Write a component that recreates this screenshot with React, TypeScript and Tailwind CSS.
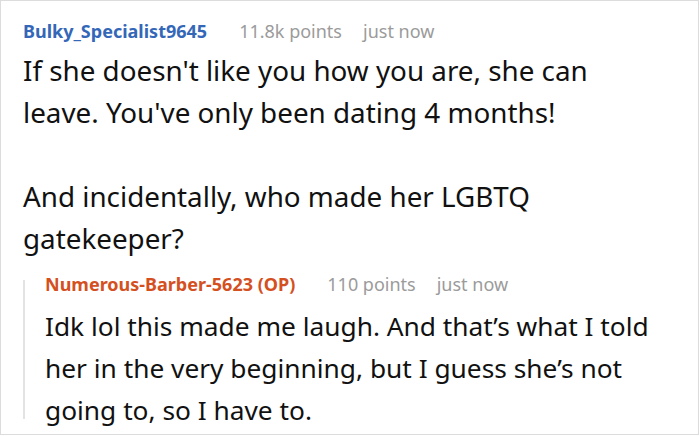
import React from 'react';

interface CommentMeta {
  author: string;
  points: string;
  time: string;
  isOp?: boolean;
}

const CommentHeader: React.FC<CommentMeta> = ({ author, points, time, isOp }) => (
  <div className="flex items-baseline text-[18px] leading-[24px]">
    <span className={`font-bold ${isOp ? 'text-[#d4501f]' : 'text-[#3467b8]'}`}>
      {author}
      {isOp && ' (OP)'}
    </span>
    <span className="ml-[32px] text-[#9b9b9b]">{points}</span>
    <span className="ml-[21px] text-[#9b9b9b]">{time}</span>
  </div>
);

const App: React.FC = () => {
  return (
    <div className="w-[700px] h-[436px] bg-white" style={{ fontFamily: '"Noto Sans", "Open Sans", sans-serif' }}>
      <div className="w-[699px] h-[435px] border border-[#dcdcdc] pl-[22px] pt-[18px] overflow-hidden">
        {/* Top-level comment */}
        <CommentHeader author="Bulky_Specialist9645" points="11.8k points" time="just now" />
        <div className="mt-[6px] text-[27.8px] leading-[42px] text-[#111] whitespace-nowrap">
          <p>
            If she doesn't like you how you are, she can
            <br />
            leave. You've only been dating 4 months!
          </p>
          <p className="mt-[42px]">
            And incidentally, who made her LGBTQ
            <br />
            gatekeeper?
          </p>
        </div>

        {/* Reply */}
        <div className="mt-[13px] flex">
          <div className="w-[2px] bg-[#e3e3e3] mt-[8px] mb-[12px] shrink-0" />
          <div className="pl-[20px]">
            <CommentHeader author="Numerous-Barber-5623" isOp points="110 points" time="just now" />
            <div className="mt-[9px] text-[26.3px] leading-[42px] text-[#111] whitespace-nowrap">
              <p>
                Idk lol this made me laugh. And that’s what I told
                <br />
                her in the very beginning, but I guess she’s not
                <br />
                going to, so I have to.
              </p>
            </div>
          </div>
        </div>
      </div>
    </div>
  );
};

export default App;
